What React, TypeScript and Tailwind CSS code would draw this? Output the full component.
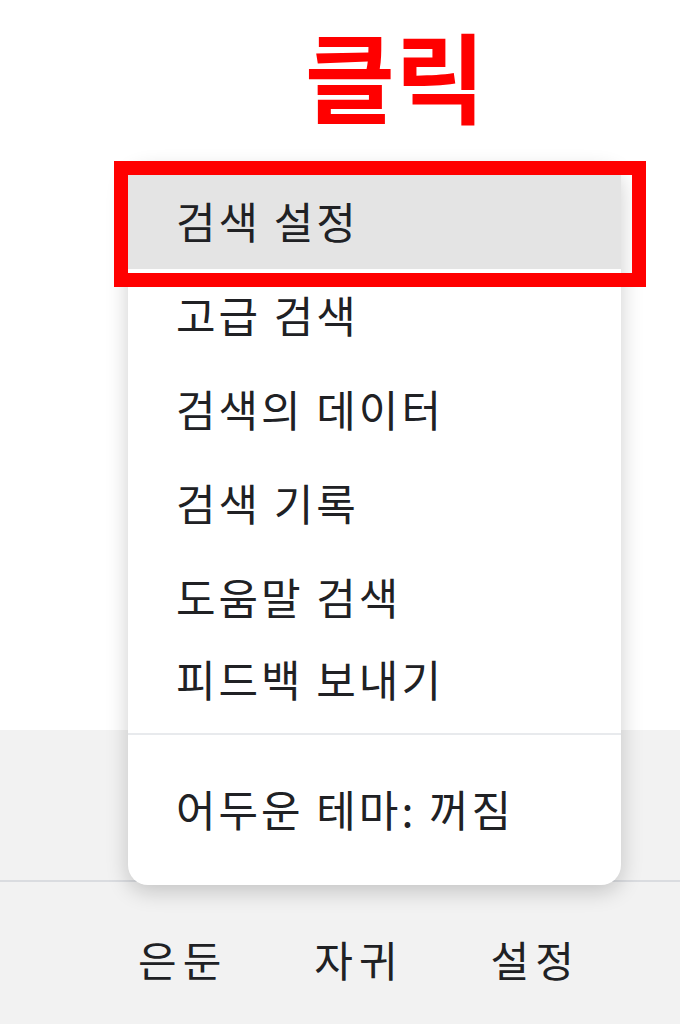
import React from 'react';

const menuItems = ['검색 설정', '고급 검색', '검색의 데이터', '검색 기록', '도움말 검색'];
const footerLinks = ['은둔', '자귀', '설정'];

export default function App() {
  return (
    <div
      className="relative w-[680px] h-[1024px] overflow-hidden bg-white text-[#202124]"
      style={{ fontFamily: '"Noto Sans CJK KR", "Noto Sans", sans-serif' }}
    >
      {/* Top white area with the annotation label */}
      <div className="h-[730px] bg-white">
        <div className="flex justify-center pt-[24px] pl-[110px]">
          <span className="text-[98px] leading-none font-bold text-[#ff0000]">클릭</span>
        </div>
      </div>

      {/* Gray band */}
      <div className="h-[152px] bg-[#f2f2f2] border-b-2 border-[#dadce0]" />

      {/* Footer */}
      <div className="h-[142px] bg-[#f2f2f2]">
        <div className="flex items-center gap-[87px] pl-[138px] pt-[56px]">
          {footerLinks.map((link) => (
            <span key={link} className="text-[42px] leading-none tracking-[6px]">
              {link}
            </span>
          ))}
        </div>
      </div>

      {/* Dropdown menu */}
      <div className="absolute left-[128px] top-[165px] w-[493px] h-[720px] bg-white rounded-[20px] shadow-[0_6px_22px_rgba(0,0,0,0.2)] pt-[10px] text-[43px] leading-none tracking-[3px]">
        {menuItems.map((item, i) => (
          <div
            key={item}
            className={`h-[94px] flex items-center pl-[48px] pb-[4px] ${i === 0 ? 'bg-[#e4e4e4]' : ''}`}
          >
            {item}
          </div>
        ))}
        <div className="h-[70px] flex items-center pl-[48px] pb-[4px]">피드백 보내기</div>
        <div className="h-[18px]" />
        <div className="h-[2px] bg-[#e8eaed]" />
        <div className="h-[150px] flex items-center pl-[48px] pb-[4px]">어두운 테마: 꺼짐</div>
      </div>

      {/* Red highlight annotation around the first item */}
      <div className="absolute left-[114px] top-[161px] w-[532px] h-[126px] border-[14px] border-[#ff0000]" />
    </div>
  );
}
